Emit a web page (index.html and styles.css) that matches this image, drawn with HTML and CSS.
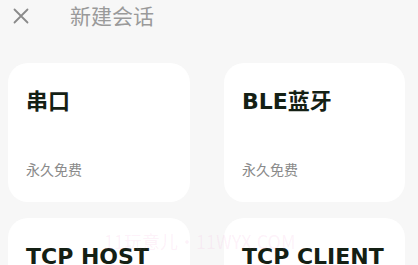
FILE: index.html
```html
<!DOCTYPE html>
<html lang="zh-CN">
<head>
<meta charset="utf-8">
<link rel="stylesheet" href="styles.css">
</head>
<body>
<div class="page">
  <header class="top">
    <svg class="close" width="16" height="16" viewBox="0 0 16 16"><path d="M1.5 1.5 L14.5 14.5 M14.5 1.5 L1.5 14.5" stroke="#8a8a8a" stroke-width="1.8" fill="none" stroke-linecap="round"/></svg>
    <div class="title">新建会话</div>
  </header>
  <div class="grid">
    <div class="card"><div class="name">串口</div><div class="sub">永久免费</div></div>
    <div class="card"><div class="name">BLE蓝牙</div><div class="sub">永久免费</div></div>
    <div class="card"><div class="name">TCP HOST</div><div class="sub">永久免费</div></div>
    <div class="card"><div class="name">TCP CLIENT</div><div class="sub">永久免费</div></div>
  </div>
  <div class="mark">11玩意儿・11WYX.COM</div>
</div>
</body>
</html>
```
FILE: styles.css
```css
html, body { margin: 0; padding: 0; }
body {
  background: #f7f7f7;
  font-family: "Noto Sans CJK SC", "Noto Sans", sans-serif;
  width: 418px;
  height: 265px;
  overflow: hidden;
}
.page { position: relative; width: 418px; height: 265px; overflow: hidden; }
.top {
  display: flex;
  align-items: center;
  height: 32px;
  padding-left: 13px;
}
.close { display: block; margin-top: -1px; }
.title {
  margin-left: 41px;
  font-size: 21px;
  color: #9a9a9a;
  line-height: 32px;
  margin-top: -2px;
}
.grid {
  display: grid;
  grid-template-columns: 182px 181px;
  column-gap: 34px;
  row-gap: 16px;
  padding: 31px 0 0 8px;
}
.card {
  background: #ffffff;
  border-radius: 20px;
  height: 139px;
  box-sizing: border-box;
  padding: 22px 18px 0 18px;
  display: flex;
  flex-direction: column;
}
.name {
  font-family: "DejaVu Sans", "Noto Sans CJK SC", sans-serif;
  font-size: 22px;
  font-weight: 700;
  color: #142014;
  line-height: 34px;
  white-space: nowrap;
}
.sub {
  margin-top: 40px;
  font-size: 14px;
  color: #8a8a8a;
  line-height: 20px;
}
.mark {
  position: absolute;
  left: 104px;
  top: 229px;
  font-size: 18px;
  color: rgba(240, 120, 200, 0.1);
  white-space: nowrap;
  line-height: 24px;
}
```
